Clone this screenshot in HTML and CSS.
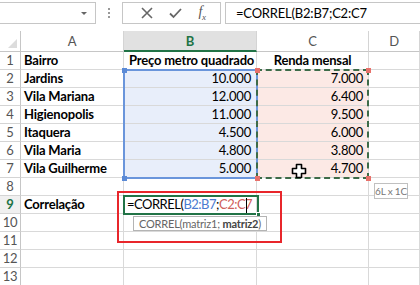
FILE: index.html
```html
<!DOCTYPE html>
<html lang="pt">
<head>
    <meta charset="UTF-8">
    <title>CORREL</title>
    <link rel="stylesheet" href="styles.css">
</head>
<body>
    <div class="app">
        <div class="bar">
            <div class="namebox"><span class="drop"></span></div>
            <div class="grip"><i></i><i></i><i></i></div>
            <div class="btns">
                <svg width="12" height="12" viewBox="0 0 12 12"><path d="M1 1 L11 11 M11 1 L1 11" stroke="#666" stroke-width="1.6"/></svg>
                <svg width="13" height="12" viewBox="0 0 13 12"><path d="M1 6.5 L4.5 10 L12 2" stroke="#666" stroke-width="1.8" fill="none"/></svg>
                <span class="fx">f<sub>x</sub></span>
            </div>
            <div class="formula">=CORREL(B2:B7;C2:C7</div>
        </div>

        <div class="sheet">
            <div class="corner"><span></span></div>
            <div class="colhead">A</div>
            <div class="colhead active">B</div>
            <div class="colhead">C</div>
            <div class="colhead">D</div>

            <div class="rowhead">1</div><div class="cell name">Bairro</div><div class="cell title">Preço metro quadrado</div><div class="cell title">Renda mensal</div><div class="cell"></div>
            <div class="rowhead">2</div><div class="cell name">Jardins</div><div class="cell num bsel">10.000</div><div class="cell num csel">7.000</div><div class="cell"></div>
            <div class="rowhead">3</div><div class="cell name">Vila Mariana</div><div class="cell num bsel">12.000</div><div class="cell num csel">6.400</div><div class="cell"></div>
            <div class="rowhead">4</div><div class="cell name">Higienopolis</div><div class="cell num bsel">11.000</div><div class="cell num csel">9.500</div><div class="cell"></div>
            <div class="rowhead">5</div><div class="cell name">Itaquera</div><div class="cell num bsel">4.500</div><div class="cell num csel">6.000</div><div class="cell"></div>
            <div class="rowhead">6</div><div class="cell name">Vila Maria</div><div class="cell num bsel">4.800</div><div class="cell num csel">3.800</div><div class="cell"></div>
            <div class="rowhead">7</div><div class="cell name">Vila Guilherme</div><div class="cell num bsel">5.000</div><div class="cell num csel">4.700</div><div class="cell"></div>
            <div class="rowhead">8</div><div class="cell"></div><div class="cell"></div><div class="cell"></div><div class="cell"></div>
            <div class="rowhead active">9</div><div class="cell name">Correlação</div><div class="cell edit">=CORREL(<span class="ref-b">B2:B7</span>;<span class="ref-c">C2:C7</span></div><div class="cell"></div><div class="cell"></div>
            <div class="rowhead">10</div><div class="cell"></div><div class="cell"></div><div class="cell"></div><div class="cell"></div>
            <div class="rowhead">11</div><div class="cell"></div><div class="cell"></div><div class="cell"></div><div class="cell"></div>
            <div class="rowhead">12</div><div class="cell"></div><div class="cell"></div><div class="cell"></div><div class="cell"></div>
            <div class="rowhead">13</div><div class="cell"></div><div class="cell"></div><div class="cell"></div><div class="cell"></div>
        </div>

        <!-- range highlights and popups over the grid -->
        <div class="range-b"></div>
        <div class="range-c"></div>
        <span class="dot blue" style="left:122px;top:68px"></span>
        <span class="dot blue" style="left:122px;top:176px"></span>
        <span class="dot red" style="left:255px;top:68px"></span>
        <span class="dot red" style="left:366px;top:68px"></span>
        <span class="dot red" style="left:255px;top:176px"></span>
        <span class="dot red" style="left:366px;top:176px"></span>

        <div class="active-cell"><span class="text-caret"></span><span class="handle"></span></div>
        <div class="callout"></div>
        <div class="tip">CORREL(matriz1; <b>matriz2</b>)</div>
        <div class="size-tip">6L x 1C</div>

        <svg class="pointer" width="16" height="16" viewBox="0 0 16 16">
            <path d="M5.5 1.5 H10.5 V5.5 H14.5 V10.5 H10.5 V14.5 H5.5 V10.5 H1.5 V5.5 H5.5 Z" fill="#fff" stroke="#000" stroke-width="1.6" stroke-linejoin="round"/>
        </svg>
    </div>
</body>
</html>
```

FILE: styles.css
```css
* {
    box-sizing: border-box;
}
body {
    margin: 0;
    background: #fff;
    font-family: Lato, "Open Sans", sans-serif;
    font-size: 13px;
    letter-spacing: -0.2px;
    color: #000;
}
.app {
    position: relative;
    width: 420px;
    height: 285px;
    overflow: hidden;
}

/* formula bar */
.bar {
    display: flex;
    align-items: flex-start;
    height: 31px;
    padding-top: 2px;
}
.namebox {
    position: relative;
    width: 97px;
    height: 22px;
    margin-left: -1px;
    border: 1px solid #c6c6c6;
}
.drop {
    position: absolute;
    right: 8px;
    top: 9px;
    border-left: 3px solid transparent;
    border-right: 3px solid transparent;
    border-top: 3px solid #666;
}
.grip {
    width: 26px;
    display: flex;
    flex-direction: column;
    align-items: center;
    gap: 2px;
    padding-top: 6px;
}
.grip i {
    width: 2px;
    height: 2px;
    background: #999;
}
.btns {
    width: 99px;
    height: 22px;
    border: 1px solid #c6c6c6;
    display: flex;
    align-items: center;
    justify-content: space-around;
    padding: 0 6px 0 10px;
}
.fx {
    font-family: "Liberation Serif", serif;
    font-style: italic;
    font-size: 14px;
    color: #555;
}
.fx sub {
    font-size: 9px;
}
.formula {
    flex: 1;
    height: 22px;
    margin-left: 4px;
    margin-right: -2px;
    border: 1px solid #c6c6c6;
    padding-left: 10px;
    line-height: 20px;
}

/* grid */
.sheet {
    display: grid;
    grid-template-columns: 21px 103px 133px 112px 51px;
    grid-template-rows: 21px;
    grid-auto-rows: 18px;
}
.corner {
    position: relative;
    border-right: 1px solid #c6c6c6;
    border-bottom: 1px solid #c6c6c6;
}
.corner span {
    position: absolute;
    right: 3px;
    bottom: 3px;
    border-left: 9px solid transparent;
    border-bottom: 9px solid #dcdcdc;
}
.colhead {
    border-right: 1px solid #d4d4d4;
    border-bottom: 1px solid #c6c6c6;
    text-align: center;
    line-height: 20px;
    color: #555;
}
.colhead.active {
    background: #e1e1e1;
    border-bottom: 2px solid #217346;
    color: #217346;
    font-weight: bold;
}
.rowhead {
    border-right: 1px solid #c6c6c6;
    border-bottom: 1px solid #d4d4d4;
    text-align: center;
    line-height: 17px;
    color: #555;
}
.rowhead.active {
    color: #217346;
    font-weight: bold;
    background: #f0f0f0;
}
.cell {
    border-right: 1px solid #d9d9d9;
    border-bottom: 1px solid #d9d9d9;
    line-height: 17px;
    padding: 0 5px;
    white-space: nowrap;
}
.name {
    font-weight: bold;
    padding-left: 3px;
}
.title {
    font-weight: bold;
    text-align: center;
}
.num {
    text-align: right;
}
.bsel {
    background: #e8eefa;
}
.csel {
    background: #fce9e5;
}
.edit {
    padding-left: 3px;
    letter-spacing: -0.5px;
}
.ref-b {
    color: #4a7bd0;
}
.ref-c {
    color: #d0605a;
}

/* overlays */
.range-b {
    position: absolute;
    left: 123px;
    top: 69px;
    width: 135px;
    height: 110px;
    border: 2px solid #6a95db;
}
.range-c {
    position: absolute;
    left: 256px;
    top: 69px;
    width: 113px;
    height: 110px;
    border: 2px dashed #3d6b48;
}
.dot {
    position: absolute;
    width: 5px;
    height: 5px;
}
.dot.blue {
    background: #5b8ad6;
}
.dot.red {
    background: #e8706a;
}
.active-cell {
    position: absolute;
    left: 123px;
    top: 195px;
    width: 136px;
    height: 20px;
    border: 2px solid #217346;
}
.text-caret {
    position: absolute;
    left: 121px;
    top: 1px;
    width: 1px;
    height: 15px;
    background: #000;
}
.handle {
    position: absolute;
    right: -4px;
    bottom: -4px;
    width: 5px;
    height: 5px;
    background: #217346;
    border: 1px solid #fff;
}
.callout {
    position: absolute;
    left: 117px;
    top: 191px;
    width: 165px;
    height: 52px;
    border: 2px solid #e8262b;
}
.tip {
    position: absolute;
    left: 133px;
    top: 216px;
    width: 134px;
    height: 15px;
    border: 1px solid #b4b4b4;
    background: #fff;
    font-size: 11px;
    line-height: 13px;
    color: #666;
    padding-left: 5px;
    white-space: nowrap;
}
.tip b {
    color: #444;
}
.size-tip {
    position: absolute;
    left: 374px;
    top: 183px;
    width: 34px;
    height: 16px;
    border: 1px solid #c0c0c0;
    background: #fff;
    font-size: 10px;
    line-height: 14px;
    color: #777;
    text-align: center;
    white-space: nowrap;
}
.pointer {
    position: absolute;
    left: 291px;
    top: 163px;
}
```
